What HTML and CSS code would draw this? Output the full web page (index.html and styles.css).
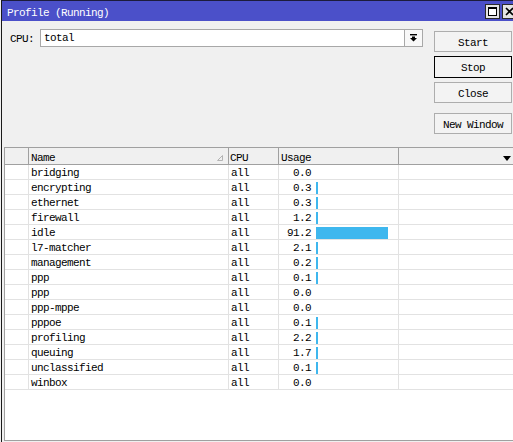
FILE: index.html
```html
<!DOCTYPE html>
<html>
<head>
<meta charset="utf-8">
<title>Profile (Running)</title>
<link rel="stylesheet" href="styles.css">
</head>
<body>
<div class="window">
  <div class="titlebar">
    <span class="title">Profile (Running)</span>
    <div class="tbtns">
      <span class="tbtn"><span class="max-icon"></span></span>
      <span class="tbtn"><svg width="9" height="9" viewBox="0 0 9 9"><path d="M1 1L8 8M8 1L1 8" stroke="#000" stroke-width="1.6"/></svg></span>
    </div>
  </div>
  <div class="body">
    <div class="top">
      <div class="cpu-row">
        <span class="label">CPU:</span>
        <div class="select">total</div>
        <div class="dd"><svg width="8" height="8" viewBox="0 0 8 8"><rect x="0" y="0" width="7" height="1.4" fill="#000"/><polygon points="2,2.4 5,2.4 5,4 7,4 3.5,7.6 0,4 2,4" fill="#000"/></svg></div>
      </div>
      <div class="buttons">
        <button class="btn">Start</button>
        <button class="btn default">Stop</button>
        <button class="btn">Close</button>
        <button class="btn new">New Window</button>
      </div>
    </div>
    <div class="list">
      <div class="row head">
        <div class="c c0"></div>
        <div class="c name">Name<svg class="sort" width="6" height="6" viewBox="0 0 6 6"><polygon points="5.5,0.5 5.5,5.5 0.5,5.5" fill="none" stroke="#b4b4b4" stroke-width="1"/></svg></div>
        <div class="c cpu">CPU</div>
        <div class="c usage">Usage</div>
        <div class="c last"><span class="arrow"></span></div>
      </div>
      <div class="row"><div class="c c0"></div><div class="c name">bridging</div><div class="c cpu">all</div><div class="c usage"><span class="num">0.0</span></div><div class="c last"></div></div>
      <div class="row"><div class="c c0"></div><div class="c name">encrypting</div><div class="c cpu">all</div><div class="c usage"><span class="num">0.3</span><span class="bar" style="width:2px"></span></div><div class="c last"></div></div>
      <div class="row"><div class="c c0"></div><div class="c name">ethernet</div><div class="c cpu">all</div><div class="c usage"><span class="num">0.3</span><span class="bar" style="width:2px"></span></div><div class="c last"></div></div>
      <div class="row"><div class="c c0"></div><div class="c name">firewall</div><div class="c cpu">all</div><div class="c usage"><span class="num">1.2</span><span class="bar" style="width:2px"></span></div><div class="c last"></div></div>
      <div class="row"><div class="c c0"></div><div class="c name">idle</div><div class="c cpu">all</div><div class="c usage"><span class="num">91.2</span><span class="bar" style="width:72px"></span></div><div class="c last"></div></div>
      <div class="row"><div class="c c0"></div><div class="c name">l7-matcher</div><div class="c cpu">all</div><div class="c usage"><span class="num">2.1</span><span class="bar" style="width:2px"></span></div><div class="c last"></div></div>
      <div class="row"><div class="c c0"></div><div class="c name">management</div><div class="c cpu">all</div><div class="c usage"><span class="num">0.2</span><span class="bar" style="width:2px"></span></div><div class="c last"></div></div>
      <div class="row"><div class="c c0"></div><div class="c name">ppp</div><div class="c cpu">all</div><div class="c usage"><span class="num">0.1</span><span class="bar" style="width:2px"></span></div><div class="c last"></div></div>
      <div class="row"><div class="c c0"></div><div class="c name">ppp</div><div class="c cpu">all</div><div class="c usage"><span class="num">0.0</span></div><div class="c last"></div></div>
      <div class="row"><div class="c c0"></div><div class="c name">ppp-mppe</div><div class="c cpu">all</div><div class="c usage"><span class="num">0.0</span></div><div class="c last"></div></div>
      <div class="row"><div class="c c0"></div><div class="c name">pppoe</div><div class="c cpu">all</div><div class="c usage"><span class="num">0.1</span><span class="bar" style="width:2px"></span></div><div class="c last"></div></div>
      <div class="row"><div class="c c0"></div><div class="c name">profiling</div><div class="c cpu">all</div><div class="c usage"><span class="num">2.2</span><span class="bar" style="width:2px"></span></div><div class="c last"></div></div>
      <div class="row"><div class="c c0"></div><div class="c name">queuing</div><div class="c cpu">all</div><div class="c usage"><span class="num">1.7</span><span class="bar" style="width:2px"></span></div><div class="c last"></div></div>
      <div class="row"><div class="c c0"></div><div class="c name">unclassified</div><div class="c cpu">all</div><div class="c usage"><span class="num">0.1</span><span class="bar" style="width:2px"></span></div><div class="c last"></div></div>
      <div class="row"><div class="c c0"></div><div class="c name">winbox</div><div class="c cpu">all</div><div class="c usage"><span class="num">0.0</span></div><div class="c last"></div></div>
    </div>
  </div>
</div>
</body>
</html>
```

FILE: styles.css
```css
html, body {
  margin: 0;
  padding: 0;
}
body {
  background: #f0f0f0;
  font-family: "Liberation Mono", "DejaVu Sans Mono", monospace;
  font-size: 11px;
  letter-spacing: -0.6px;
  color: #000;
  overflow: hidden;
}
.window {
  margin-left: 1px;
  width: 512px;
  height: 442px;
  box-sizing: border-box;
  border-top: 1px solid #1c1c3c;
  border-left: 1px solid #1a1a1a;
  display: flex;
  flex-direction: column;
  background: #f0f0f0;
  overflow: hidden;
}
.titlebar {
  height: 20px;
  flex: none;
  background: #4b50c9;
  display: flex;
  align-items: flex-start;
  padding-left: 5px;
  color: #fff;
}
.title {
  line-height: 15px;
  padding-top: 5px;
}
.tbtns {
  margin-left: auto;
  margin-right: -4px;
  display: flex;
  gap: 2px;
  margin-top: 3px;
}
.tbtn {
  width: 15px;
  height: 15px;
  box-sizing: border-box;
  border: 1px solid #2a2a2a;
  background: #e4e4e4;
  display: flex;
  align-items: center;
  justify-content: center;
}
.max-icon {
  width: 9px;
  height: 9px;
  box-sizing: border-box;
  border: 1px solid #000;
  border-top-width: 2px;
  background: #fff;
}
.body {
  flex: 1;
  display: flex;
  flex-direction: column;
  min-height: 0;
}
.top {
  height: 126px;
  flex: none;
  display: flex;
  align-items: flex-start;
}
.cpu-row {
  flex: 1;
  display: flex;
  align-items: center;
  padding: 8px 0 0 8px;
}
.label {
  width: 24px;
  margin-right: 6px;
  padding-top: 2px;
}
.select {
  flex: 1;
  height: 18px;
  box-sizing: border-box;
  border: 1px solid #a8a8a8;
  background: #fff;
  padding: 1px 0 0 3px;
  line-height: 15px;
}
.dd {
  width: 18px;
  height: 18px;
  box-sizing: border-box;
  border: 1px solid #a8a8a8;
  border-left: none;
  background: #f8f8f8;
  display: flex;
  align-items: center;
  justify-content: center;
}
.buttons {
  width: 78px;
  margin: 10px 1px 0 11px;
  display: flex;
  flex-direction: column;
  gap: 4px;
}
.btn {
  height: 21px;
  width: 78px;
  box-sizing: border-box;
  border: 1px solid #adadad;
  background: #f3f3f3;
  font: inherit;
  letter-spacing: inherit;
  color: #000;
  padding: 2px 0 0 0;
  margin: 0;
}
.btn.default {
  border-color: #000;
  height: 22px;
}
.btn.new {
  margin-top: 6px;
}
.list {
  flex: 1;
  margin: 0 0 1px 2px;
  border-top: 1px solid #a0a0a0;
  border-left: 1px solid #a0a0a0;
  border-bottom: 1px solid #a0a0a0;
  background: #fff;
  overflow: hidden;
}
.row {
  display: flex;
  height: 15px;
  box-sizing: border-box;
  border-bottom: 1px solid #e2e2e2;
  line-height: 14px;
}
.row.head {
  height: 17px;
  line-height: 16px;
  background: #f0f0f0;
  border-bottom-color: #a0a0a0;
}
.c {
  box-sizing: border-box;
  border-right: 1px solid #e2e2e2;
  white-space: nowrap;
  overflow: hidden;
  display: flex;
  align-items: center;
  padding-top: 2px;
}
.head .c {
  border-right-color: #a0a0a0;
  padding-top: 4px;
}
.c0 { width: 24px; }
.name { width: 200px; padding-left: 2px; }
.cpu { width: 50px; padding-left: 2px; }
.head .cpu { padding-left: 1px; }
.usage { width: 120px; }
.head .usage { padding-left: 2px; }
.last { flex: 1; border-right: none; justify-content: flex-end; }
.sort {
  margin-left: auto;
  margin-right: 5px;
}
.num {
  width: 32px;
  text-align: right;
  flex: none;
}
.bar {
  height: 12px;
  margin-left: 5px;
  background: #3eb7ee;
  flex: none;
}
.arrow {
  width: 0;
  height: 0;
  border-left: 4px solid transparent;
  border-right: 4px solid transparent;
  border-top: 5px solid #000;
  margin-right: 2px;
}
```
